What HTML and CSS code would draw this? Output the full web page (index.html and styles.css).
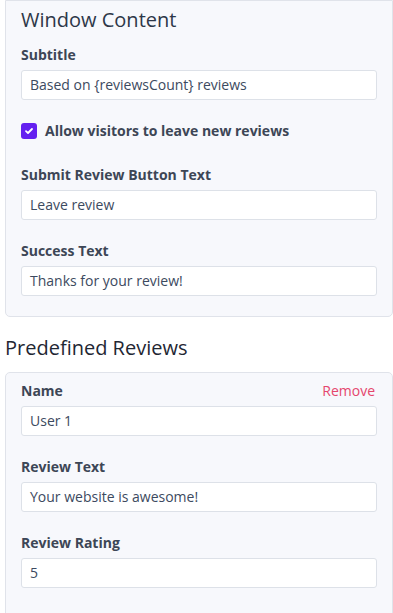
FILE: index.html
```html
<!DOCTYPE html>
<html>
<head>
<meta charset="utf-8">
<link rel="stylesheet" href="styles.css">
</head>
<body>
<div class="page">
  <section class="card card-top">
    <h2 class="card-title">Window Content</h2>
    <div class="field">
      <label class="label">Subtitle</label>
      <div class="input">Based on {reviewsCount} reviews</div>
    </div>
    <div class="check-row">
      <span class="checkbox">
        <svg width="10" height="10" viewBox="0 0 10 10"><path d="M2 5.2 L4 7 L8 3" fill="none" stroke="#fff" stroke-width="1.8" stroke-linecap="round" stroke-linejoin="round"/></svg>
      </span>
      <span class="check-label">Allow visitors to leave new reviews</span>
    </div>
    <div class="field">
      <label class="label">Submit Review Button Text</label>
      <div class="input">Leave review</div>
    </div>
    <div class="field">
      <label class="label">Success Text</label>
      <div class="input">Thanks for your review!</div>
    </div>
  </section>

  <h2 class="section-title">Predefined Reviews</h2>

  <section class="card card-bottom">
    <div class="field">
      <div class="label-row">
        <label class="label">Name</label>
        <span class="remove">Remove</span>
      </div>
      <div class="input">User 1</div>
    </div>
    <div class="field">
      <label class="label">Review Text</label>
      <div class="input">Your website is awesome!</div>
    </div>
    <div class="field">
      <label class="label">Review Rating</label>
      <div class="input">5</div>
    </div>
  </section>
</div>
</body>
</html>
```
FILE: styles.css
```css
* { box-sizing: border-box; }
html, body { margin: 0; padding: 0; background: #ffffff; }
body {
  font-family: "Open Sans", "Noto Sans", sans-serif;
  color: #2f3a4b;
  font-size: 14px;
}
.page {
  padding: 0 0 0 5px;
}
.card {
  background: #f7f8fc;
  border: 1px solid #e0e3ea;
  border-radius: 5px;
  padding: 0 15px 20px 15px;
}
.card-top { border-top-left-radius: 0; border-top-right-radius: 0; }
.card-title {
  margin: 0;
  font-size: 20px;
  font-weight: 400;
  line-height: 28px;
  padding-top: 5px;
  color: #2d3748;
}
.field { display: flex; flex-direction: column; }
.label {
  font-weight: 700;
  font-size: 14px;
  line-height: 20px;
  color: #3d4656;
  margin: 21px 0 5px;
  display: block;
}
.card-title + .field .label { margin-top: 11px; }
.check-row + .field .label { margin-top: 26px; }
.input {
  height: 30px;
  background: #ffffff;
  border: 1px solid #dde1e8;
  border-radius: 3px;
  padding: 0 8px;
  line-height: 28px;
  color: #3c4a60;
  font-size: 14px;
}
.check-row {
  display: flex;
  align-items: center;
  gap: 8px;
  height: 16px;
  margin-top: 23px;
}
.checkbox {
  width: 16px;
  height: 16px;
  border-radius: 3px;
  background: #6420f0;
  display: flex;
  align-items: center;
  justify-content: center;
}
.check-label {
  font-weight: 700;
  color: #3d4656;
  line-height: 20px;
}
.section-title {
  margin: 0;
  font-size: 20px;
  font-weight: 400;
  line-height: 28px;
  padding: 17px 0 10px;
  color: #1f2733;
}
.label-row {
  display: flex;
  justify-content: space-between;
  align-items: baseline;
  margin: 8px 0 5px;
}
.label-row .label { margin: 0; }
.remove {
  color: #e5466d;
  font-size: 14px;
  line-height: 20px;
  padding-right: 2px;
}
.card-bottom { padding-bottom: 30px; }
```
